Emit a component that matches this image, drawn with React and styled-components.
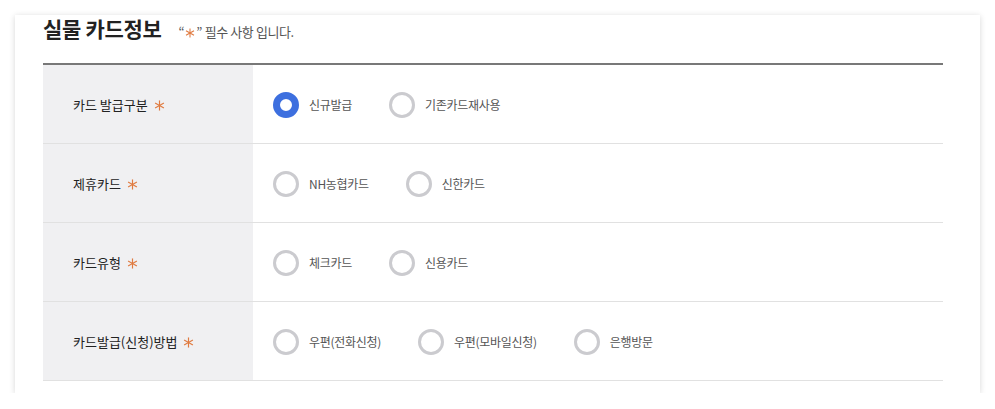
import React, { useState } from "react";
import styled, { createGlobalStyle } from "styled-components";

const Global = createGlobalStyle`
  html, body { margin: 0; padding: 0; background: #fff; }
  body { font-family: "Noto Sans CJK KR", "Noto Sans", sans-serif; }
  * { box-sizing: border-box; }
`;

const Page = styled.div`
  padding: 15px 15px 0 15px;
`;

const Card = styled.section`
  width: 965px;
  height: 378px;
  background: #fff;
  box-shadow: 0 1px 6px rgba(0, 0, 0, 0.16);
  padding: 0 37px 13px 28px;
`;

const Header = styled.div`
  display: flex;
  align-items: baseline;
  gap: 17px;
  height: 48px;
`;

const Title = styled.h2`
  margin: 0;
  font-size: 21px;
  line-height: 26px;
  font-weight: 700;
  color: #222;
  letter-spacing: -0.3px;
`;

const Note = styled.span`
  font-size: 13px;
  color: #555;
  letter-spacing: -0.4px;
`;

const StarSvg = styled.svg`
  width: ${(p) => p.$size || 11}px;
  height: ${(p) => p.$size || 11}px;
  margin: 0 ${(p) => p.$mr || 0}px 0 ${(p) => p.$ml || 0}px;
  position: relative;
  top: ${(p) => p.$top || 0}px;
  flex: none;
`;

function Star(props) {
  return (
    <StarSvg viewBox="0 0 12 12" aria-label="*" role="img" {...props}>
      <g stroke="#e07b41" strokeWidth="1.3" strokeLinecap="butt">
        <line x1="6" y1="0.5" x2="6" y2="11.5" />
        <line x1="1.2" y1="3.25" x2="10.8" y2="8.75" />
        <line x1="1.2" y1="8.75" x2="10.8" y2="3.25" />
      </g>
    </StarSvg>
  );
}

const Table = styled.div`
  border-top: 2px solid #787878;
`;

const Row = styled.div`
  display: grid;
  grid-template-columns: 210px 1fr;
  height: 79px;
  border-bottom: 1px solid #e1e1e1;
`;

const Label = styled.div`
  background: #f0f0f2;
  display: flex;
  align-items: center;
  padding-left: 30px;
  font-size: 13px;
  color: #222;
  letter-spacing: 0;
`;

const Options = styled.div`
  display: flex;
  align-items: center;
  padding-left: 20px;
  padding-top: 1px;
`;

const Option = styled.label`
  display: flex;
  align-items: center;
  margin-right: 37px;
  cursor: pointer;
  font-size: 12px;
  color: #555;
  letter-spacing: -0.3px;
`;

const Circle = styled.span`
  width: 26px;
  height: 26px;
  border-radius: 50%;
  border: ${(p) => (p.$on ? "7px solid #3d6fdf" : "3px solid #cbcbcf")};
  background: #fff;
  margin-right: 10px;
  flex: none;
`;

const rows = [
  { label: "카드 발급구분", opts: ["신규발급", "기존카드재사용"], sel: 0 },
  { label: "제휴카드", opts: ["NH농협카드", "신한카드"], sel: -1 },
  { label: "카드유형", opts: ["체크카드", "신용카드"], sel: -1 },
  { label: "카드발급(신청)방법", opts: ["우편(전화신청)", "우편(모바일신청)", "은행방문"], sel: -1 },
];

export default function App() {
  const [sel, setSel] = useState(rows.map((r) => r.sel));
  return (
    <Page>
      <Global />
      <Card>
        <Header>
          <Title>실물 카드정보</Title>
          <Note>
            “<Star $size={10} $top={1} $ml={1} $mr={1} />” 필수 사항 입니다.
          </Note>
        </Header>
        <Table>
          {rows.map((r, i) => (
            <Row key={r.label}>
              <Label>
                {r.label}
                <Star $ml={6} $top={1} />
              </Label>
              <Options>
                {r.opts.map((o, j) => (
                  <Option key={o} onClick={() => setSel(sel.map((v, k) => (k === i ? j : v)))}>
                    <Circle $on={sel[i] === j} />
                    {o}
                  </Option>
                ))}
              </Options>
            </Row>
          ))}
        </Table>
      </Card>
    </Page>
  );
}
